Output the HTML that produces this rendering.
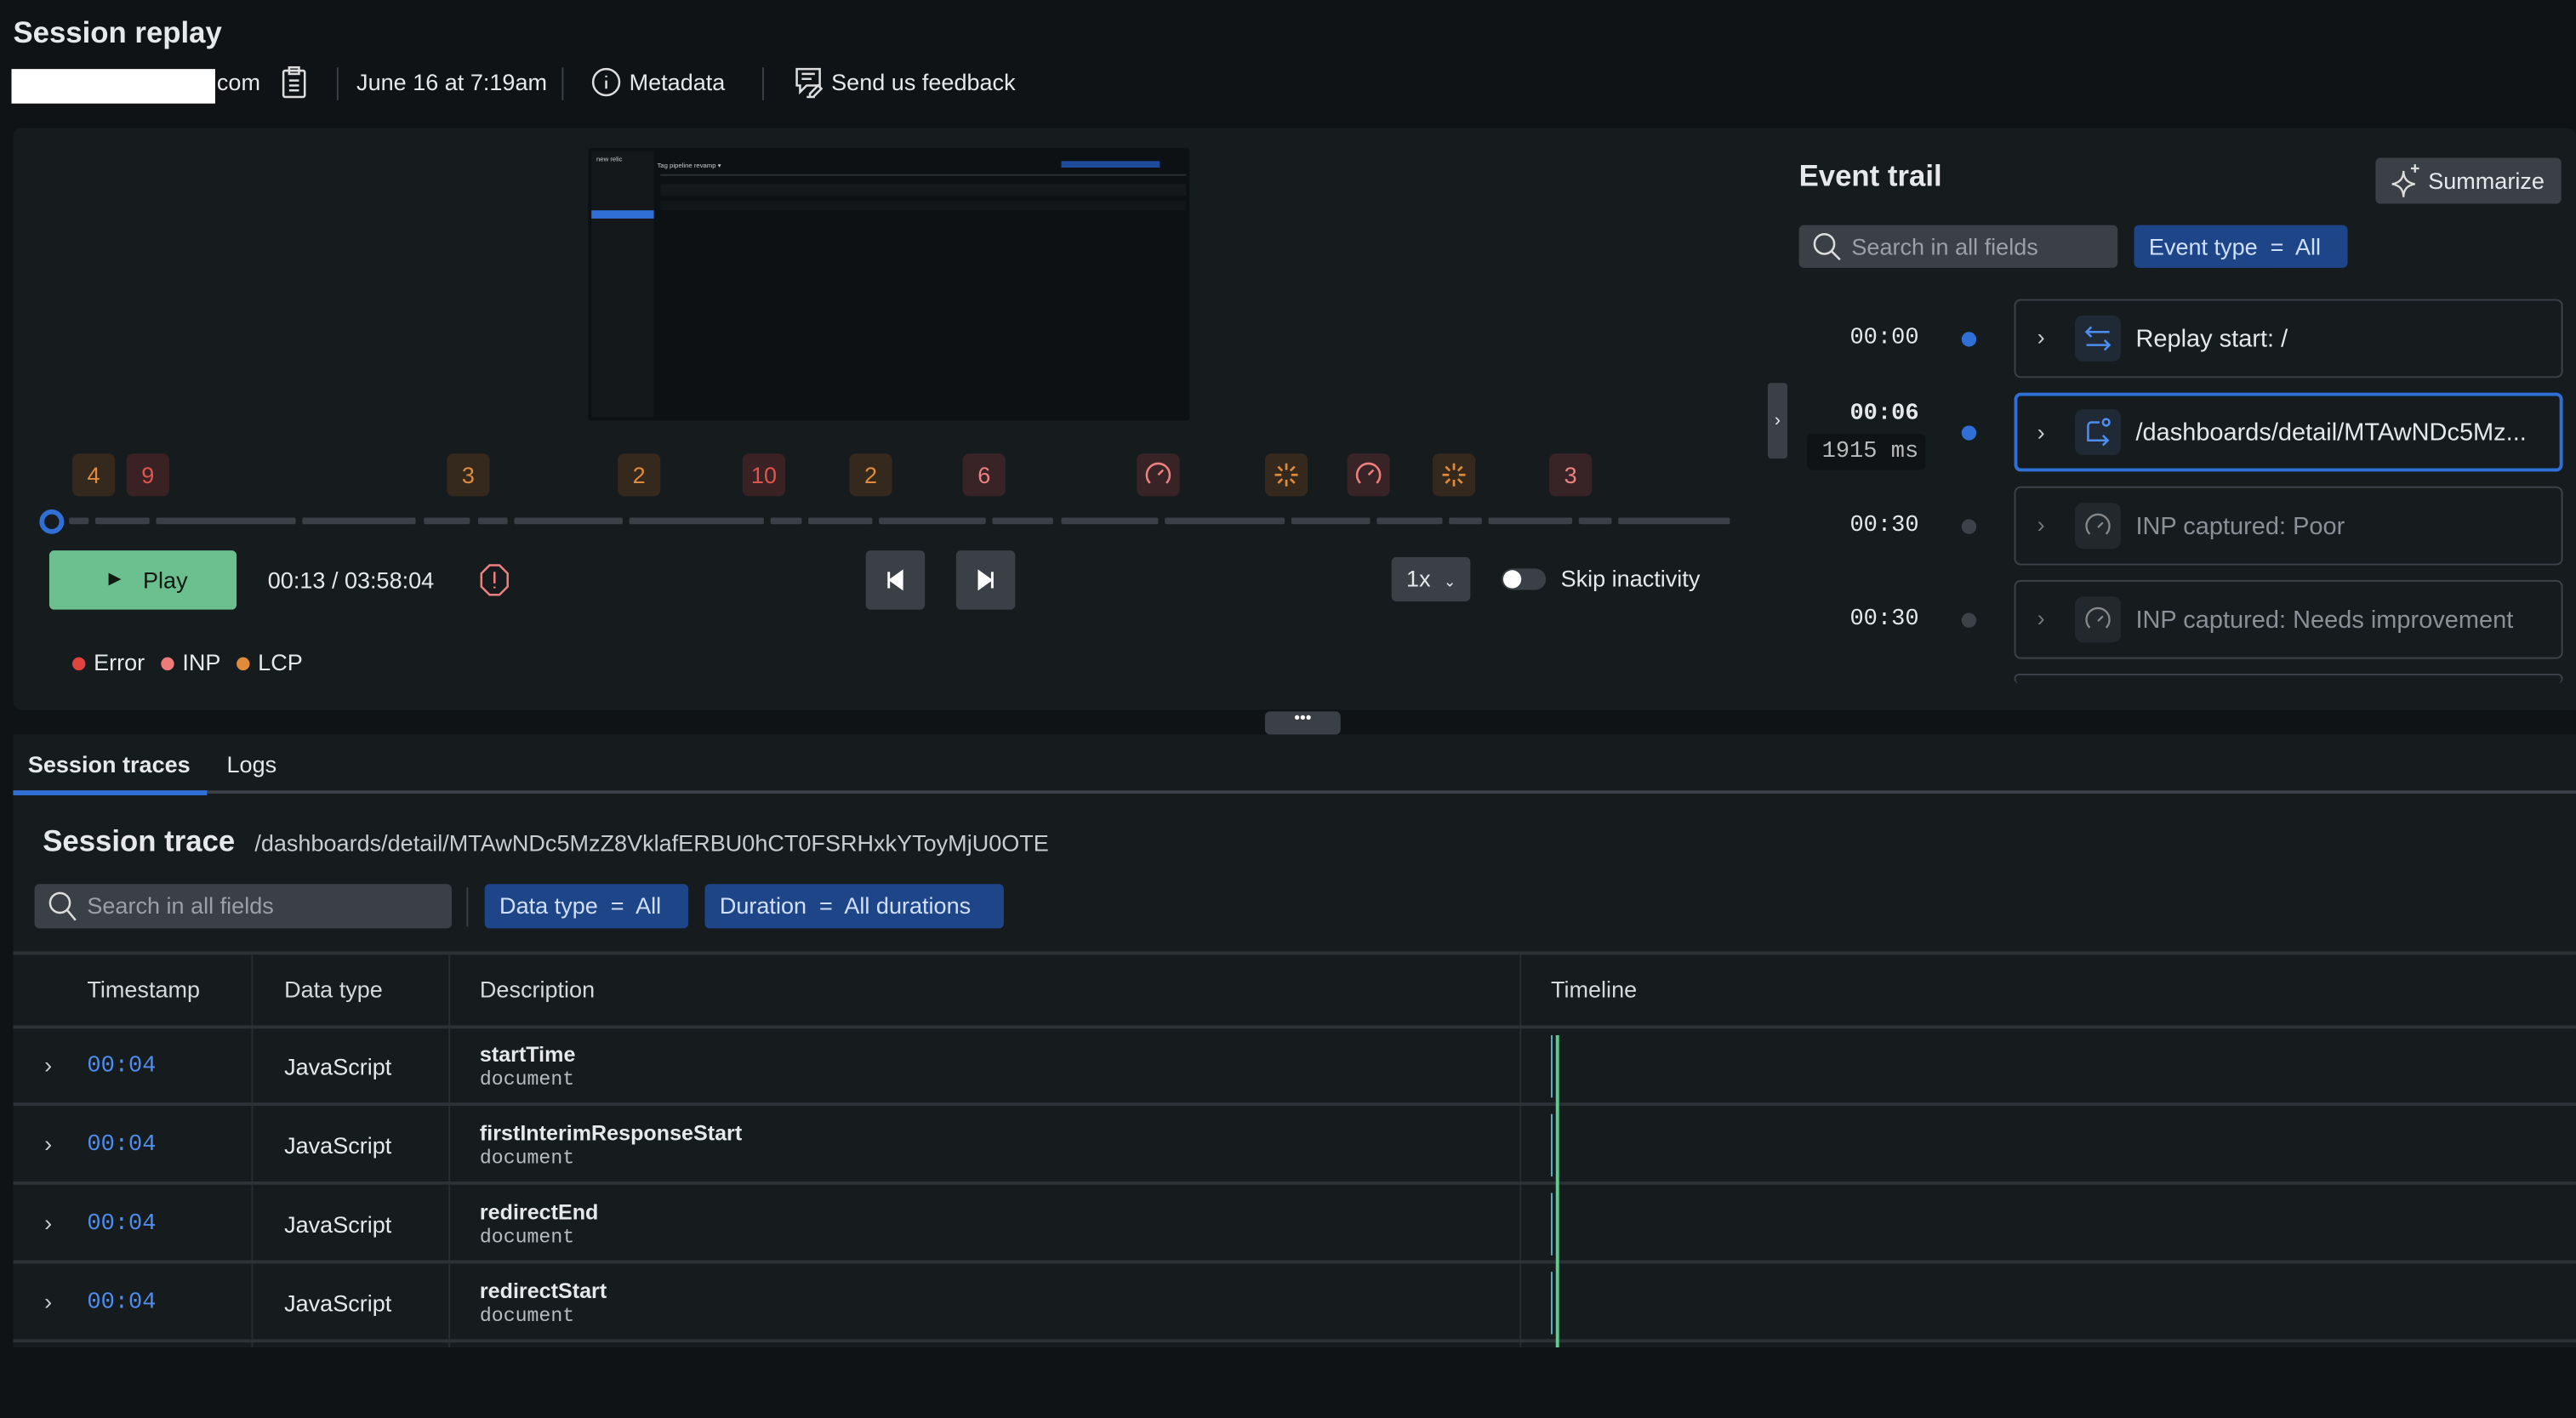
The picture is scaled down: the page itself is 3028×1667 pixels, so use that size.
<!DOCTYPE html>
<html><head><meta charset="utf-8">
<style>
*{box-sizing:border-box;margin:0;padding:0}
html,body{width:3028px;height:1584px;overflow:hidden;background:#0f1315}
#s{position:absolute;left:0;top:0;width:1568px;height:820px;transform:scale(1.93112,1.93171);transform-origin:0 0;font-family:"Liberation Sans",sans-serif;color:#e6e8ea;background:#0f1315}
.a{position:absolute}
.mono{font-family:"Liberation Mono",monospace}
.sep{position:absolute;top:41px;width:1px;height:20px;background:#3a4046}
.badge{position:absolute;top:276px;width:26px;height:26px;border-radius:4px;font-size:14px;text-align:center;line-height:26px}
.bo{background:#35281d;color:#e08a3c}.br{background:#3a2224;color:#e0544c}.bp{background:#382426;color:#ef8080}
.seg{position:absolute;top:315px;height:4px;background:#394046;border-radius:1px}
.card{position:absolute;left:1226px;width:334px;height:48px;border:1px solid #3c4248;border-radius:4px}
.ic{position:absolute;left:36px;top:9px;width:28px;height:28px;border-radius:5px;background:#1f2a36}
.ts{position:absolute;left:1126px;font-size:14px;color:#e6e8ea}
.dot{position:absolute;left:1194px;width:9px;height:9px;border-radius:50%}
.row{position:absolute;left:8px;width:1560px;height:48px;border-top:2px solid #2c3236}
.chev{position:absolute;font-size:14px;color:#c9ccd0}
</style></head><body><div id="s">
<div class="a" style="left:8px;top:10px;font-size:18px;font-weight:bold">Session replay</div>
<div class="a" style="left:7px;top:42px;width:124px;height:21px;background:#fff"></div>
<div class="a" style="left:132px;top:42px;font-size:14px">com</div>
<svg class="a" style="left:171px;top:40px" width="16" height="20" viewBox="0 0 16 20" fill="none" stroke="#ddd" stroke-width="1.3"><rect x="1.5" y="3" width="13" height="16" rx="1"/><rect x="5" y="1" width="6" height="4"/><path d="M5 9h6M5 12h6M5 15h6"/></svg>
<div class="sep" style="left:205px"></div>
<div class="a" style="left:217px;top:42px;font-size:14px">June 16 at 7:19am</div>
<div class="sep" style="left:342px"></div>
<svg class="a" style="left:360px;top:41px" width="18" height="18" viewBox="0 0 18 18" fill="none" stroke="#ddd" stroke-width="1.3"><circle cx="9" cy="9" r="8"/><path d="M9 8v5M9 5v1"/></svg>
<div class="a" style="left:383px;top:42px;font-size:14px">Metadata</div>
<div class="sep" style="left:464px"></div>
<svg class="a" style="left:483px;top:40px" width="20" height="20" viewBox="0 0 20 20" fill="none" stroke="#ddd" stroke-width="1.3"><path d="M2 2h14v10H8l-4 4v-4H2z"/><path d="M5 5h8M5 8h6M10 17l5-5 2 2-5 5h-2zM8 19h5"/></svg>
<div class="a" style="left:506px;top:42px;font-size:14px">Send us feedback</div>

<div class="a" style="left:8px;top:78px;width:1560px;height:354px;background:#161b1e;border-radius:5px"></div>
<!-- thumbnail -->
<div class="a" style="left:358px;top:90px;width:366px;height:166px;background:#0e1113;border-radius:2px">
 <div class="a" style="left:2px;top:2px;width:38px;height:162px;background:#14181b"></div>
 <div class="a" style="left:2px;top:38px;width:38px;height:5px;background:#2f6fd6"></div>
 <div class="a" style="left:5px;top:4px;font-size:4px;color:#ccc">new relic</div>
 <div class="a" style="left:42px;top:8px;font-size:4px;color:#ccc">Tag pipeline revamp ▾</div>
 <div class="a" style="left:288px;top:8px;width:60px;height:4px;background:#1e4a9a"></div>
 <div class="a" style="left:44px;top:16px;width:320px;height:1px;background:#2a2f33"></div>
 <div class="a" style="left:44px;top:22px;width:320px;height:7px;background:#15191c"></div>
 <div class="a" style="left:44px;top:32px;width:320px;height:6px;background:#121618"></div>
</div>
<!-- badges -->
<div class="badge bo" style="left:44px">4</div>
<div class="badge br" style="left:77px">9</div>
<div class="badge bo" style="left:272px">3</div>
<div class="badge bo" style="left:376px">2</div>
<div class="badge br" style="left:452px">10</div>
<div class="badge bo" style="left:517px">2</div>
<div class="badge bp" style="left:586px">6</div>
<div class="badge bp" style="left:692px"><svg width="26" height="26" viewBox="0 0 26 26" fill="none" stroke="#ef8080" stroke-width="1.3"><path d="M8 18a7 7 0 1 1 10 0"/><path d="M13 13l3-3"/></svg></div>
<div class="badge bo" style="left:770px"><svg width="26" height="26" viewBox="0 0 26 26" stroke="#e08a3c" stroke-width="1.4"><path d="M13 6v4M13 16v4M6 13h4M16 13h4M8 8l2.5 2.5M15.5 15.5L18 18M18 8l-2.5 2.5M10.5 15.5L8 18"/></svg></div>
<div class="badge bp" style="left:820px"><svg width="26" height="26" viewBox="0 0 26 26" fill="none" stroke="#ef8080" stroke-width="1.3"><path d="M8 18a7 7 0 1 1 10 0"/><path d="M13 13l3-3"/></svg></div>
<div class="badge bo" style="left:872px"><svg width="26" height="26" viewBox="0 0 26 26" stroke="#e08a3c" stroke-width="1.4"><path d="M13 6v4M13 16v4M6 13h4M16 13h4M8 8l2.5 2.5M15.5 15.5L18 18M18 8l-2.5 2.5M10.5 15.5L8 18"/></svg></div>
<div class="badge bp" style="left:943px">3</div>
<!-- timeline -->
<div class="seg" style="left:42px;width:12px"></div><div class="seg" style="left:58px;width:33px"></div><div class="seg" style="left:95px;width:85px"></div><div class="seg" style="left:184px;width:69px"></div><div class="seg" style="left:258px;width:28px"></div><div class="seg" style="left:291px;width:18px"></div><div class="seg" style="left:313px;width:66px"></div><div class="seg" style="left:383px;width:82px"></div><div class="seg" style="left:469px;width:19px"></div><div class="seg" style="left:492px;width:39px"></div><div class="seg" style="left:535px;width:65px"></div><div class="seg" style="left:604px;width:37px"></div><div class="seg" style="left:646px;width:59px"></div><div class="seg" style="left:709px;width:73px"></div><div class="seg" style="left:786px;width:48px"></div><div class="seg" style="left:838px;width:40px"></div><div class="seg" style="left:882px;width:20px"></div><div class="seg" style="left:906px;width:51px"></div><div class="seg" style="left:961px;width:20px"></div><div class="seg" style="left:985px;width:68px"></div>
<div class="a" style="left:24px;top:310px;width:15px;height:15px;border:3px solid #2f6fd6;border-radius:50%;background:#161b1e"></div>
<!-- controls -->
<div class="a" style="left:30px;top:335px;width:114px;height:36px;background:#6cc08f;border-radius:3px;color:#0e1a12;font-size:14px;line-height:36px"><span style="position:absolute;left:36px;font-size:10px">▶</span><span style="position:absolute;left:57px">Play</span></div>
<div class="a" style="left:163px;top:345px;font-size:14px">00:13 / 03:58:04</div>
<svg class="a" style="left:292px;top:343px" width="18" height="20" viewBox="0 0 18 20" fill="none" stroke="#ef8080" stroke-width="1.3"><path d="M6 1h6l5 5v8l-5 5H6l-5-5V6z"/><path d="M9 5v7M9 14v1"/></svg>
<div class="a" style="left:527px;top:335px;width:36px;height:36px;background:#3a4046;border-radius:3px"><svg width="36" height="36"><path d="M14 13v10M22 13l-7 5 7 5z" stroke="#fff" fill="#fff" stroke-width="1.5"/></svg></div>
<div class="a" style="left:582px;top:335px;width:36px;height:36px;background:#3a4046;border-radius:3px"><svg width="36" height="36"><path d="M22 13v10M14 13l7 5-7 5z" stroke="#fff" fill="#fff" stroke-width="1.5"/></svg></div>
<div class="a" style="left:847px;top:339px;width:48px;height:27px;background:#3a4046;border-radius:3px;font-size:14px;line-height:27px;padding-left:9px">1x <span style="font-size:9px;margin-left:4px">⌄</span></div>
<div class="a" style="left:914px;top:346px;width:27px;height:13px;background:#3a4046;border-radius:7px"><div class="a" style="left:1px;top:1px;width:11px;height:11px;background:#fff;border-radius:50%"></div></div>
<div class="a" style="left:950px;top:344px;font-size:14px">Skip inactivity</div>
<div class="a" style="left:44px;top:395px;font-size:14px"><span style="display:inline-block;width:8px;height:8px;border-radius:50%;background:#e0443c;margin-right:5px"></span>Error <span style="display:inline-block;width:8px;height:8px;border-radius:50%;background:#ef7a7a;margin:0 5px 0 6px"></span>INP <span style="display:inline-block;width:8px;height:8px;border-radius:50%;background:#e08a3c;margin:0 5px 0 6px"></span>LCP</div>
<!-- event trail -->
<div class="a" style="left:1076px;top:233px;width:12px;height:46px;background:#3a4046;border-radius:2px;font-size:11px;text-align:center;line-height:46px">›</div>
<div class="a" style="left:1095px;top:97px;font-size:18px;font-weight:bold">Event trail</div>
<div class="a" style="left:1446px;top:96px;width:113px;height:28px;background:#3a4046;border-radius:3px;font-size:14px;line-height:28px;padding-left:32px">Summarize</div>
<svg class="a" style="left:1454px;top:99px" width="20" height="22" viewBox="0 0 20 22" fill="none" stroke="#ddd" stroke-width="1.2"><path d="M9 5q0 7 -7 8q7 1 7 8q0-7 7-8q-7-1-7-8z"/><path d="M16 1v5M13.5 3.5h5"/></svg>
<div class="a" style="left:1095px;top:137px;width:194px;height:26px;background:#3a4046;border-radius:3px;font-size:14px;line-height:26px;padding-left:32px;color:#9aa0a6">Search in all fields</div>
<svg class="a" style="left:1103px;top:141px" width="18" height="18" viewBox="0 0 18 18" fill="none" stroke="#ddd" stroke-width="1.3"><circle cx="7.5" cy="7.5" r="6"/><path d="M12 12l5 5"/></svg>
<div class="a" style="left:1299px;top:137px;width:130px;height:26px;background:#1f4589;border-radius:3px;font-size:14px;line-height:26px;padding-left:9px;color:#cfe0ff;white-space:pre">Event type  =  All</div>
<div class="ts mono" style="top:198px">00:00</div>
<div class="dot" style="top:202px;background:#2f6fd6"></div>
<div class="ts mono" style="top:244px;font-weight:bold">00:06</div>
<div class="a mono" style="left:1100px;top:264px;width:72px;height:22px;background:#0f1315;border-radius:3px;font-size:14px;line-height:22px;padding-left:9px;color:#bbb">1915 ms</div>
<div class="dot" style="top:259px;background:#2f6fd6"></div>
<div class="ts mono" style="top:312px">00:30</div>
<div class="dot" style="top:316px;background:#3c4248"></div>
<div class="ts mono" style="top:369px">00:30</div>
<div class="dot" style="top:373px;background:#3c4248"></div>
<div class="card" style="top:182px"><div class="chev" style="left:13px;top:14px">›</div><div class="ic"><svg width="28" height="28" fill="none" stroke="#4d8ef0" stroke-width="1.3"><path d="M7 10h14M10 7l-3 3 3 3M21 18H7M18 15l3 3-3 3"/></svg></div><div class="a" style="left:73px;top:15px;font-size:15px">Replay start: /</div></div>
<div class="card" style="top:239px;border:2px solid #2f6fd6;height:48px"><div class="chev" style="left:12px;top:14px">›</div><div class="ic" style="left:35px;top:8px"><svg width="28" height="28" fill="none" stroke="#4d8ef0" stroke-width="1.3"><path d="M15 8H10a2 2 0 0 0-2 2v9h12M17 16l3 3-3 3"/><circle cx="19" cy="8" r="2"/></svg></div><div class="a" style="left:72px;top:14px;font-size:15px;white-space:nowrap">/dashboards/detail/MTAwNDc5Mz...</div></div>
<div class="card" style="top:296px"><div class="chev" style="left:13px;top:14px;color:#777">›</div><div class="ic" style="background:#23282c"><svg width="28" height="28" fill="none" stroke="#888" stroke-width="1.2"><path d="M9 19a7 7 0 1 1 10 0M14 15l3-3"/></svg></div><div class="a" style="left:73px;top:15px;font-size:15px;color:#8a9096">INP captured: Poor</div></div>
<div class="card" style="top:353px"><div class="chev" style="left:13px;top:14px;color:#777">›</div><div class="ic" style="background:#23282c"><svg width="28" height="28" fill="none" stroke="#888" stroke-width="1.2"><path d="M9 19a7 7 0 1 1 10 0M14 15l3-3"/></svg></div><div class="a" style="left:73px;top:15px;font-size:15px;color:#8a9096">INP captured: Needs improvement</div></div>
<div class="card" style="top:410px;height:6px;border-bottom:none"></div>
<div class="a" style="left:1226px;top:416px;width:342px;height:16px;background:#161b1e"></div>
<!-- drag handle -->
<div class="a" style="left:770px;top:433px;width:46px;height:14px;background:#3a4046;border-radius:3px;font-size:10px;text-align:center;line-height:10px;color:#fff">•••</div>
<!-- lower -->
<div class="a" style="left:8px;top:447px;width:1560px;height:373px;background:#161b1e"></div>
<div class="a" style="left:17px;top:457px;font-size:14px;font-weight:bold">Session traces</div>
<div class="a" style="left:138px;top:457px;font-size:14px">Logs</div>
<div class="a" style="left:8px;top:481px;width:1560px;height:2px;background:#3a4046"></div>
<div class="a" style="left:8px;top:481px;width:118px;height:3px;background:#2f6fd6"></div>
<div class="a" style="left:26px;top:502px;font-size:18px;font-weight:bold">Session trace</div>
<div class="a" style="left:155px;top:505px;font-size:14px;color:#c9ccd0">/dashboards/detail/MTAwNDc5MzZ8VklafERBU0hCT0FSRHxkYToyMjU0OTE</div>
<div class="a" style="left:21px;top:538px;width:254px;height:27px;background:#3a4046;border-radius:3px;font-size:14px;line-height:27px;padding-left:32px;color:#9aa0a6">Search in all fields</div>
<svg class="a" style="left:29px;top:542px" width="18" height="20" viewBox="0 0 18 20" fill="none" stroke="#ddd" stroke-width="1.3"><circle cx="7.5" cy="7.5" r="6"/><path d="M12 12l5 6"/></svg>
<div class="a" style="left:284px;top:540px;width:1px;height:24px;background:#3a4046"></div>
<div class="a" style="left:295px;top:538px;width:124px;height:27px;background:#1f4589;border-radius:3px;font-size:14px;line-height:27px;padding-left:9px;color:#cfe0ff;white-space:pre">Data type  =  All</div>
<div class="a" style="left:429px;top:538px;width:182px;height:27px;background:#1f4589;border-radius:3px;font-size:14px;line-height:27px;padding-left:9px;color:#cfe0ff;white-space:pre">Duration  =  All durations</div>
<div class="a" style="left:8px;top:579px;width:1560px;height:2px;background:#2c3236"></div>
<div class="a" style="left:153px;top:581px;width:1px;height:239px;background:#262d30"></div>
<div class="a" style="left:273px;top:581px;width:1px;height:239px;background:#262d30"></div>
<div class="a" style="left:925px;top:581px;width:1px;height:239px;background:#262d30"></div>
<div class="a" style="left:53px;top:594px;font-size:14px;color:#d6d9dc">Timestamp</div>
<div class="a" style="left:173px;top:594px;font-size:14px;color:#d6d9dc">Data type</div>
<div class="a" style="left:292px;top:594px;font-size:14px;color:#d6d9dc">Description</div>
<div class="a" style="left:944px;top:594px;font-size:14px;color:#d6d9dc">Timeline</div>
<div class="row" style="top:624px"></div><div class="row" style="top:671px"></div><div class="row" style="top:719px"></div><div class="row" style="top:767px"></div><div class="row" style="top:815px"></div>
<div class="a" style="left:944px;top:630px;width:1px;height:38px;background:#5ab0c8"></div>
<div class="a" style="left:944px;top:678px;width:1px;height:38px;background:#5ab0c8"></div>
<div class="a" style="left:944px;top:726px;width:1px;height:38px;background:#5ab0c8"></div>
<div class="a" style="left:944px;top:774px;width:1px;height:38px;background:#5ab0c8"></div>
<div class="a" style="left:947px;top:630px;width:2px;height:190px;background:#5ad08c"></div>

<div class="chev" style="left:27px;top:640px">›</div><div class="a mono" style="left:53px;top:641px;font-size:14px;color:#4d8ef0">00:04</div><div class="a" style="left:173px;top:641px;font-size:14px">JavaScript</div><div class="a" style="left:292px;top:634px;font-size:13px;font-weight:bold">startTime</div><div class="a mono" style="left:292px;top:650px;font-size:12px;color:#b8bcc0">document</div>
<div class="chev" style="left:27px;top:688px">›</div><div class="a mono" style="left:53px;top:689px;font-size:14px;color:#4d8ef0">00:04</div><div class="a" style="left:173px;top:689px;font-size:14px">JavaScript</div><div class="a" style="left:292px;top:682px;font-size:13px;font-weight:bold">firstInterimResponseStart</div><div class="a mono" style="left:292px;top:698px;font-size:12px;color:#b8bcc0">document</div>
<div class="chev" style="left:27px;top:736px">›</div><div class="a mono" style="left:53px;top:737px;font-size:14px;color:#4d8ef0">00:04</div><div class="a" style="left:173px;top:737px;font-size:14px">JavaScript</div><div class="a" style="left:292px;top:730px;font-size:13px;font-weight:bold">redirectEnd</div><div class="a mono" style="left:292px;top:746px;font-size:12px;color:#b8bcc0">document</div>
<div class="chev" style="left:27px;top:784px">›</div><div class="a mono" style="left:53px;top:785px;font-size:14px;color:#4d8ef0">00:04</div><div class="a" style="left:173px;top:785px;font-size:14px">JavaScript</div><div class="a" style="left:292px;top:778px;font-size:13px;font-weight:bold">redirectStart</div><div class="a mono" style="left:292px;top:794px;font-size:12px;color:#b8bcc0">document</div>
</div></body></html>
